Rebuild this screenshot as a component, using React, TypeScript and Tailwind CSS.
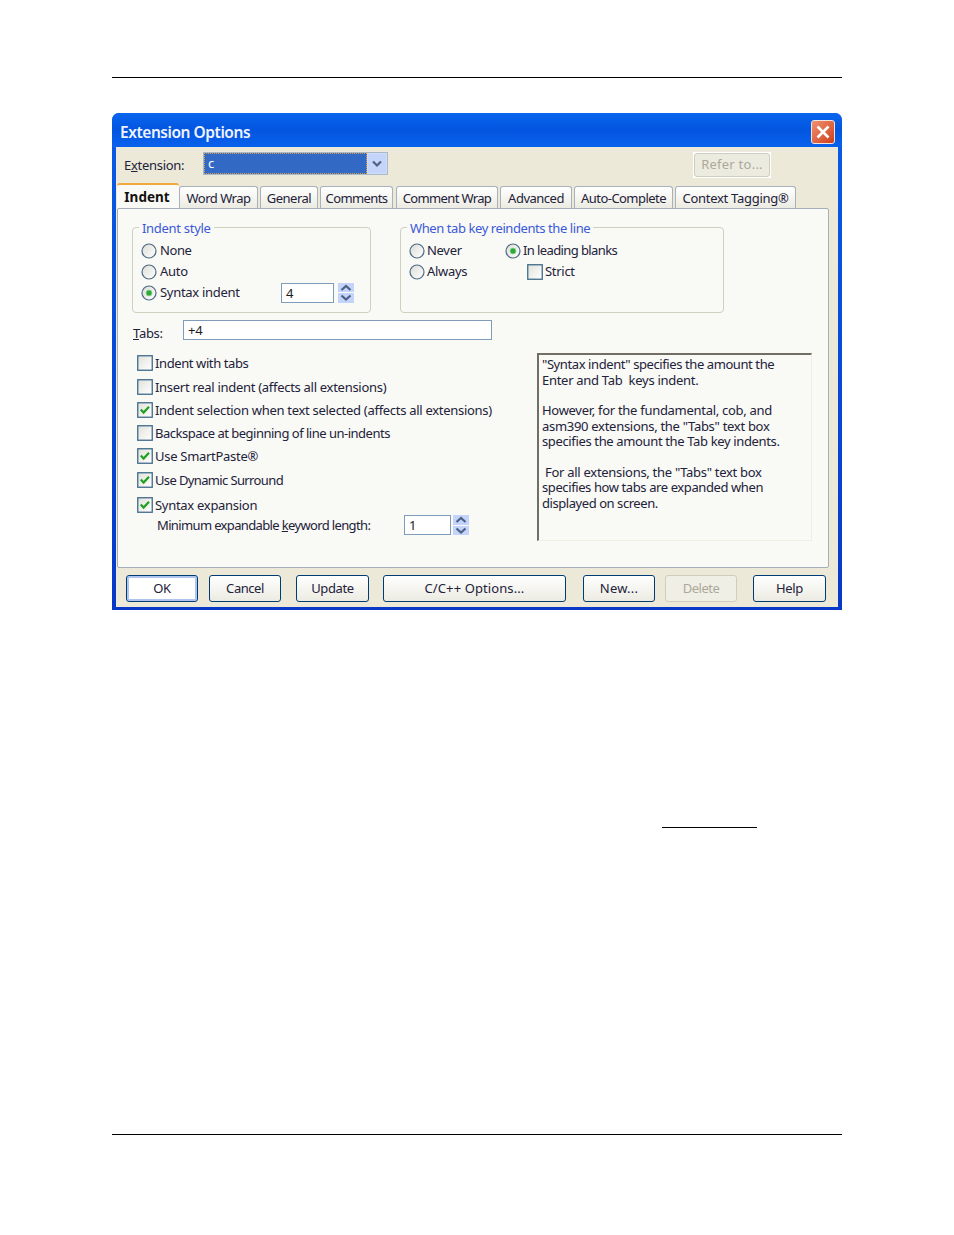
import React from "react";

const F = "[font-family:'Noto_Sans','Liberation_Sans',sans-serif]";

function Radio({ on }: { on?: boolean }) {
  return (
    <svg width="16" height="16" viewBox="0 0 16 16" className="shrink-0">
      <defs>
        <linearGradient id="rg" x1="0" y1="0" x2="1" y2="1">
          <stop offset="0" stopColor="#dcdcd6" />
          <stop offset="1" stopColor="#ffffff" />
        </linearGradient>
      </defs>
      <circle cx="8" cy="8" r="7" fill="url(#rg)" stroke="#4f6b85" strokeWidth="1.2" />
      {on && <circle cx="8" cy="8" r="3" fill="#2fa83a" stroke="#8fd897" strokeWidth="0.8" />}
    </svg>
  );
}

function Check({ on }: { on?: boolean }) {
  return (
    <svg width="16" height="16" viewBox="0 0 16 16" className="shrink-0">
      <defs>
        <linearGradient id="cg" x1="0" y1="0" x2="1" y2="1">
          <stop offset="0" stopColor="#e2e2da" />
          <stop offset="1" stopColor="#ffffff" />
        </linearGradient>
      </defs>
      <rect x="0.75" y="0.75" width="14.5" height="14.5" fill="url(#cg)" stroke="#3f6a8c" strokeWidth="1.3" />
      {on && <path d="M3.8 7.6 L6.6 10.6 L12 4.8" fill="none" stroke="#21a121" strokeWidth="2.2" />}
    </svg>
  );
}

function Spinner() {
  return (
    <div className="flex h-[20px] w-[16px] flex-col gap-px">
      {["M3.5 7 L8 3 L12.5 7", "M3.5 2.5 L8 6.5 L12.5 2.5"].map((d) => (
        <div key={d} className="flex h-[9.5px] flex-1 items-center justify-center bg-[#c3d3fa]">
          <svg width="16" height="9" viewBox="0 0 16 9">
            <path d={d} fill="none" stroke="#4d6185" strokeWidth="2.2" />
          </svg>
        </div>
      ))}
    </div>
  );
}

function Field({ w, h = 20, children }: { w: number; h?: number; children: React.ReactNode }) {
  return (
    <div
      style={{ width: w, height: h }}
      className="flex items-center border border-[#7f9db9] bg-white pl-[4px] pt-[2px] text-[#1c1c1c]"
    >
      {children}
    </div>
  );
}

function Group({ title, w, className, titleClass, children }: { title: string; w: number; className?: string; titleClass?: string; children: React.ReactNode }) {
  return (
    <div style={{ width: w }} className={`relative h-[86px] rounded-[4px] border border-[#d0d0bf] pt-[12px] ${className ?? ""}`}>
      <span className={`absolute left-[6px] top-[-7px] bg-[#f9f9f5] px-[3px] leading-[15px] text-[#3a5ad8] ${titleClass ?? ""}`}>{title}</span>
      {children}
    </div>
  );
}

function Opt({ label, on, radio, indent = 8, labelClass }: { label: string; on?: boolean; radio?: boolean; indent?: number; labelClass?: string }) {
  return (
    <div className="flex h-[21px] items-center gap-[2px]" style={{ paddingLeft: indent }}>
      {radio ? <Radio on={on} /> : <Check on={on} />}
      <span className={labelClass}>{label}</span>
    </div>
  );
}

const tabs: [string, number, number, string][] = [
  ["Word Wrap", 79, 0, "tracking-[-0.5px]"],
  ["General", 58, 2, "tracking-[-0.5px]"],
  ["Comments", 73, 2, "tracking-[-0.6px]"],
  ["Comment Wrap", 102, 3, "tracking-[-0.65px]"],
  ["Advanced", 72, 2, "tracking-[-0.5px]"],
  ["Auto-Complete", 99, 2, "tracking-[-0.55px]"],
  ["Context Tagging®", 121, 2, "tracking-[-0.29px]"],
];

const checks: [string, boolean, number, string][] = [
  ["Indent with tabs", false, 0, "tracking-[-0.4px]"],
  ["Insert real indent (affects all extensions)", false, 4, "tracking-[-0.29px]"],
  ["Indent selection when text selected (affects all extensions)", true, 3, "tracking-[-0.29px]"],
  ["Backspace at beginning of line un-indents", false, 3, "tracking-[-0.5px]"],
  ["Use SmartPaste®", true, 3, "tracking-[-0.29px]"],
  ["Use Dynamic Surround", true, 4, "tracking-[-0.63px]"],
  ["Syntax expansion", true, 5, "tracking-[-0.29px]"],
];

const buttons: [string, number, number, string, boolean?, boolean?][] = [
  ["OK", 72, 0, "tracking-[-0.29px]", true],
  ["Cancel", 72, 11, "tracking-[-0.45px]"],
  ["Update", 73, 15, "tracking-[-0.35px]"],
  ["C/C++ Options...", 183, 14, "tracking-[0.1px]"],
  ["New...", 72, 17, "tracking-[0.2px]"],
  ["Delete", 72, 10, "tracking-[-0.5px]", false, true],
  ["Help", 73, 16, "tracking-[-0.29px]"],
];

export default function App() {
  return (
    <div className={`flex h-[1235px] w-[954px] flex-col bg-white px-[112px] pt-[77px] ${F} text-[13px] tracking-[-0.29px] text-[#22223a]`}>
      <div className="h-px bg-black" />
      <div className="mt-[35px] h-[497px] w-[730px] rounded-t-[7px] bg-gradient-to-b from-[#0a5ce6] to-[#0838c8]">
        {/* title bar */}
        <div className="flex h-[34px] items-start justify-between rounded-t-[7px] bg-gradient-to-b from-[#0a66ee] via-[#0355e0] to-[#0a62ec] pl-[8px] pr-[7px] pt-[7px]">
          <span className="mt-[2px] text-[15.5px] font-semibold leading-[21px] tracking-[-0.45px] text-[#f0f4ff]">Extension Options</span>
          <div className="flex h-[24px] w-[24px] items-center justify-center rounded-[3px] border border-[#f0e4dc] bg-gradient-to-br from-[#ee9070] to-[#cf3c14]">
            <svg width="16" height="16" viewBox="0 0 16 16">
              <path d="M2.5 2.5 L13.5 13.5 M13.5 2.5 L2.5 13.5" stroke="white" strokeWidth="2.6" />
            </svg>
          </div>
        </div>
        {/* client */}
        <div className="mx-[4px] h-[460px] bg-[#ece9d8]">
          <div className="flex h-[37px] items-start">
            <span className="ml-[8px] mt-[9px] w-[79px] leading-[18px]">
              E<span className="underline">x</span>tension:
            </span>
            <div className="mt-[5px] flex h-[23px] w-[185px] items-center border border-[#a8b8c8] bg-[#f4f2e8]">
              <div className="flex h-full flex-1 items-center border border-dotted border-[#d8a040] bg-[#3169c5] pl-[3px] text-white">c</div>
              <div className="flex h-full w-[20px] items-center justify-center border border-[#d0dcf8] bg-[#c5d5fa]">
                <svg width="12" height="10" viewBox="0 0 12 10">
                  <path d="M2 2.5 L6 6.5 L10 2.5" fill="none" stroke="#4d6185" strokeWidth="2.2" />
                </svg>
              </div>
            </div>
            <div className="ml-[305px] mt-[5px] bg-white p-px">
              <div className="flex h-[24px] w-[76px] items-center justify-center rounded-[3px] border border-[#cfcdbe] bg-[#ecebe0] tracking-[0.25px] text-[#aca899]">Refer to...</div>
            </div>
          </div>

          {/* tabs */}
          <div className="relative z-10 -mt-px flex h-[25px] items-end pl-px">
            <div className="flex h-[25px] w-[62px] items-center justify-center rounded-t-[3px] border-t-[2px] border-[#f0a83c] bg-[#f9f9f5] pr-[2px] pt-[2px] text-[13.5px] font-bold tracking-[0] text-[#111]">Indent</div>
            {tabs.map(([t, w, m, c]) => (
              <div
                key={t}
                style={{ width: w, marginLeft: m }}
                className={`flex h-[22px] items-center justify-center rounded-t-[3px] border border-b-0 border-[#a9b2bc] bg-gradient-to-b from-white to-[#ecebe2] pt-[2px] ${c}`}
              >
                {t}
              </div>
            ))}
          </div>

          {/* panel */}
          <div className="ml-px h-[360px] w-[712px] rounded-[2px] border border-[#a5afb8] bg-[#f9f9f5] pl-[14px] pt-[18px]">
            <div className="flex">
              <Group title="Indent style" w={239}>
                <Opt radio label="None" labelClass="ml-px tracking-[-0.4px]" />
                <Opt radio label="Auto" labelClass="ml-px" />
                <div className="flex h-[21px] items-center">
                  <div className="w-[148px]">
                    <Opt radio on label="Syntax indent" labelClass="ml-px mt-px" />
                  </div>
                  <Field w={53}>4</Field>
                  <div className="ml-[4px]">
                    <Spinner />
                  </div>
                </div>
              </Group>
              <Group title="When tab key reindents the line" titleClass="tracking-[-0.42px]" w={324} className="ml-[29px]">
                <div className="flex">
                  <div className="w-[104px]">
                    <Opt radio label="Never" />
                    <Opt radio label="Always" />
                  </div>
                  <div>
                    <Opt radio on label="In leading blanks" indent={0} labelClass="tracking-[-0.6px]" />
                    <Opt label="Strict" indent={22} />
                  </div>
                </div>
              </Group>
            </div>

            <div className="mt-[6px] flex h-[21px] items-center">
              <span className="mt-[8px] w-[51px] pl-px">
                <span className="underline">T</span>abs:
              </span>
              <Field w={309}>+4</Field>
            </div>

            <div className="mt-[13px] flex">
              <div className="w-[405px] pl-[5px]">
                {checks.map(([t, on, m, c]) => (
                  <div key={t} style={{ marginTop: m }} className="flex h-[20px] items-center gap-[2px]">
                    <Check on={on} />
                    <span className={`mt-[1px] whitespace-nowrap ${c}`}>{t}</span>
                  </div>
                ))}
                <div className="flex h-[20px] items-center pl-[20px]">
                  <span className="mt-[1px] w-[247px] whitespace-nowrap tracking-[-0.64px]">
                    Minimum expandable <span className="underline">k</span>eyword length:
                  </span>
                  <Field w={47}>1</Field>
                  <div className="ml-[2px]">
                    <Spinner />
                  </div>
                </div>
              </div>
              <div className="h-[188px] w-[275px] border border-[#f0efe4] border-l-[2px] border-t-[2px] border-l-[#716f64] border-t-[#716f64] pl-[3px] pt-[2px] leading-[15.5px]">
                <p className="tracking-[-0.41px]">"Syntax indent" specifies the amount the</p>
                <p>Enter and Tab&nbsp; keys indent.</p>
                <p className="mt-[15px]">However, for the fundamental, cob, and</p>
                <p>asm390 extensions, the "Tabs" text box</p>
                <p className="tracking-[-0.36px]">specifies the amount the Tab key indents.</p>
                <p className="mt-[15px]">&nbsp;For all extensions, the "Tabs" text box</p>
                <p className="tracking-[-0.4px]">specifies how tabs are expanded when</p>
                <p className="tracking-[-0.44px]">displayed on screen.</p>
              </div>
            </div>
          </div>

          {/* buttons */}
          <div className="flex pl-[10px] pt-[7px]">
            {buttons.map(([t, w, m, c, def, dis]) => (
              <div
                key={t}
                style={{ width: w, marginLeft: m }}
                className={`${c} ${
                  dis
                    ? "flex h-[27px] items-center justify-center rounded-[3px] border border-[#cfcdbe] bg-[#f0efe6] text-[#aca899]"
                    : def
                      ? "flex h-[27px] items-center justify-center rounded-[3px] border border-[#003c74] bg-white text-[#22223a] shadow-[inset_0_0_0_2px_#b0c4f0]"
                      : "flex h-[27px] items-center justify-center rounded-[3px] border border-[#003c74] bg-gradient-to-b from-white to-[#ecebe2] text-[#22223a]"
                }`}
              >
                {t}
              </div>
            ))}
          </div>
        </div>
      </div>
      <div className="ml-[550px] mt-[217px] h-px w-[95px] bg-black" />
      <div className="mt-[306px] h-px bg-black" />
    </div>
  );
}
